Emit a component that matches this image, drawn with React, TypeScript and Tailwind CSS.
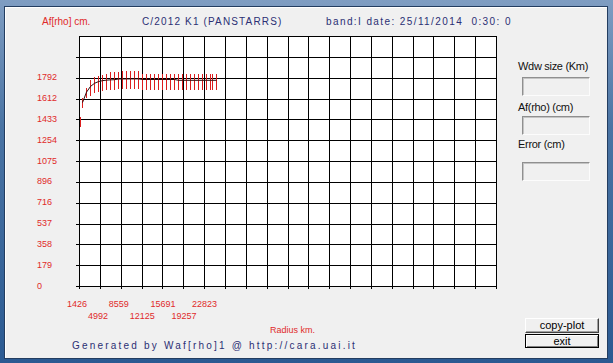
const gridX0 = 79;
const gridX1 = 496;
const gridY0 = 36;
const gridY1 = 286;
const cols = 20;
const rows = 12;

const yLabels = ["1792", "1612", "1433", "1254", "1075", "896", "716", "537", "358", "179", "0"];
const xRow1 = ["1426", "8559", "15691", "22823"];
const xRow2 = ["4992", "12125", "19257"];

// curve points with error bars, in page pixels
const points = Array.from({ length: 36 }, (_, i) => {
  const x = 2 * Math.round((79 + i * 3.94) / 2) + 0.5;
  const y = 79.5 + 42 * Math.exp(-0.6 * i) + (i > 24 ? 0.8 : 0) - (i > 9 && i < 16 ? 0.6 : 0);
  const up = i < 3 ? 4.5 : i >= 8 && i <= 15 ? 7.5 : 6;
  const down = i < 3 ? 5.5 : 10;
  return { x, y, top: y - up, bottom: y + down };
});

function Plot() {
  const cw = (gridX1 - gridX0) / cols;
  const rh = (gridY1 - gridY0) / rows;
  return (
    <svg width={426} height={257} viewBox="76 35 426 257">
      <rect x={gridX0} y={gridY0} width={gridX1 - gridX0} height={gridY1 - gridY0} fill="#ffffff" />
      {Array.from({ length: cols + 1 }, (_, i) => {
        const x = Math.round(gridX0 + i * cw) + 0.5;
        return <line key={"v" + i} x1={x} y1={gridY0} x2={x} y2={gridY1 + 3} stroke="#000" strokeWidth={1} />;
      })}
      {Array.from({ length: rows + 1 }, (_, j) => {
        const y = Math.round(gridY0 + j * rh) + 0.5;
        return <line key={"h" + j} x1={j === 0 ? gridX0 : gridX0 - 3} y1={y} x2={gridX1 + 1} y2={y} stroke="#000" strokeWidth={1} />;
      })}
      {points.map((p, i) => (
        <line key={"e" + i} x1={p.x} y1={Math.round(p.top)} x2={p.x} y2={Math.round(p.bottom)} stroke="#dc1e1e" strokeWidth={1} />
      ))}
      <polyline
        points={points.slice(1).map((p) => `${p.x},${p.y}`).join(" ")}
        fill="none"
        stroke="#2a0c0c"
        strokeWidth={1}
      />
    </svg>
  );
}

function Box({ mt }: { mt: string }) {
  return (
    <div className={`${mt} ml-[4px] w-[68px] h-[19px] bg-[#f0f0f0] border border-t-[#8f8f8f] border-l-[#8f8f8f] border-b-[#fcfcfc] border-r-[#fcfcfc] shadow-[inset_1px_1px_0_#c4c4c4]`} />
  );
}

export default function App() {
  return (
    <div className="w-[613px] h-[363px] overflow-hidden bg-[linear-gradient(180deg,#7f9dc2_0%,#4a74a4_35%,#2b5a92_100%)] pt-[6px] pl-[4px] pr-[5px] pb-[4px] font-['Liberation_Sans',Arial,sans-serif]">
      <div className="w-full h-full flex flex-col bg-[#f0f0f0] border border-[#233d60] shadow-[inset_1px_1px_0_#ffffff]">
        {/* header */}
        <div className="flex items-center h-[28px] shrink-0">
          <span className="ml-[37px] w-[100px] text-[10px] text-[#e02a2a]">Af[rho] cm.</span>
          <span className="w-[184px] text-[10px] tracking-[1.15px] text-[#2b2f74]">C/2012 K1 (PANSTARRS)</span>
          <span className="text-[10px] tracking-[1.4px] text-[#2b2f74] whitespace-pre">band:I date: 25/11/2014  0:30: 0</span>
        </div>

        {/* plot row */}
        <div className="flex h-[257px] shrink-0">
          <div className="w-[71px] pl-[32px] pt-[32.25px] flex flex-col">
            {yLabels.map((l) => (
              <div key={l} className="h-[20.83px] leading-[20.83px] text-[9px] text-[#e02a2a]">
                {l}
              </div>
            ))}
          </div>
          <Plot />
          <div className="flex flex-col pl-[16px] text-[11px] tracking-[-0.3px] text-[#111]">
            <div className="mt-[24px] h-[14px] leading-[14px]">Wdw size (Km)</div>
            <Box mt="mt-[4px]" />
            <div className="mt-[4px] h-[14px] leading-[14px]">Af(rho) (cm)</div>
            <Box mt="mt-[2px]" />
            <div className="mt-[2px] h-[14px] leading-[14px]">Error (cm)</div>
            <Box mt="mt-[11px]" />
          </div>
        </div>

        {/* bottom */}
        <div className="flex flex-1">
          <div className="w-[515px] flex flex-col">
            <div className="mt-[6px] ml-[62px] flex h-[12px] leading-[12px] text-[9px] text-[#e02a2a]">
              {xRow1.map((l) => (
                <span key={l} className="w-[41.7px]">{l}</span>
              ))}
            </div>
            <div className="ml-[83px] flex h-[12px] leading-[12px] text-[9px] text-[#e02a2a]">
              {xRow2.map((l) => (
                <span key={l} className="w-[41.7px]">{l}</span>
              ))}
            </div>
            <div className="mt-[2px] ml-[265px] h-[12px] leading-[12px] text-[9px] text-[#e02a2a]">Radius km.</div>
            <div className="mt-[3px] ml-[67px] h-[14px] leading-[14px] text-[10px] tracking-[2.2px] text-[#2b2f74] whitespace-pre">
              Generated by Waf[rho]1 @ http://cara.uai.it
            </div>
          </div>
          <div className="flex flex-col pl-[5px] pt-[26px]">
            <button className="w-[74px] h-[15px] flex items-center justify-center bg-[#f0f0f0] border border-t-white border-l-white border-b-[#404040] border-r-[#404040] shadow-[inset_-1px_-1px_0_#a0a0a0] text-[11px] leading-none text-black">
              copy-plot
            </button>
            <button className="mt-[1px] w-[74px] h-[14px] flex items-center justify-center bg-[#f0f0f0] border border-black shadow-[inset_1px_1px_0_#ffffff,inset_-1px_-1px_0_#808080] text-[11px] leading-none text-black">
              exit
            </button>
          </div>
        </div>
      </div>
    </div>
  );
}
